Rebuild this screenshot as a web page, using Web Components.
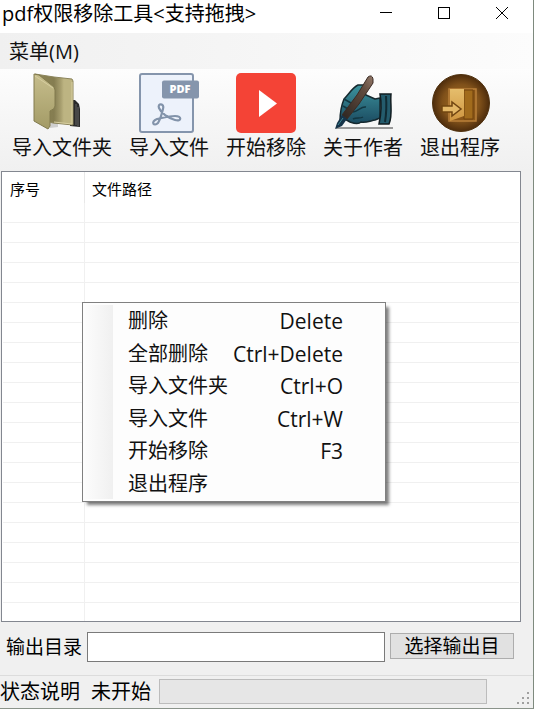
<!DOCTYPE html>
<html lang="zh-CN">
<head>
<meta charset="utf-8">
<title>pdf权限移除工具</title>
<style>
html,body{margin:0;height:100%}
body{font-family:"Open Sans","Noto Sans CJK SC",sans-serif;font-size:20px;line-height:28px;color:#111;background:#f0f0f0}
</style>
</head>
<body>
<app-window>
  <title-bar>pdf权限移除工具&lt;支持拖拽&gt;</title-bar>
  <menu-bar>菜单(M)</menu-bar>
  <tool-bar>
    <tool-button>
      <svg slot="icon" viewBox="0 0 60 60" width="60" height="60">
        <defs><linearGradient id="fa" x1="0" y1="0" x2="0" y2="1"><stop offset="0" stop-color="#c6bd8c"/><stop offset="1" stop-color="#a39b66"/></linearGradient>
        <linearGradient id="fb" x1="0" y1="0" x2="1" y2="0"><stop offset="0" stop-color="#8c8454"/><stop offset=".5" stop-color="#857d51"/><stop offset=".68" stop-color="#a89f6f"/><stop offset=".76" stop-color="#bdb482"/><stop offset="1" stop-color="#bdb482"/></linearGradient></defs>
        <path d="M18 55l8-1v-5l-8 1z" fill="#aaa" opacity=".5"/>
        <path d="M38 27h5l4 4 1 5v18l-10-1z" fill="#292929"/><path d="M44 31v21M46 34v19" stroke="#666"/>
        <path d="M3 1l19 3 18 2 1 2v44l-20-2-18-5z" fill="url(#fb)" stroke="#8b845b"/>
        <path d="M2 1l5 1 15 12 1 3v16q0 3-5 5v15l-2 3-14-8z" fill="url(#fa)" stroke="#827b4e"/>
        <path d="M3 3l18 12M40 9v42l-18-2" fill="none" stroke="#d7cea0"/>
      </svg>导入文件夹</tool-button>
    <tool-button>
      <svg slot="icon" viewBox="0 0 60 60" width="60" height="60">
        <rect x="1" y="1" width="53" height="58" rx="2" fill="#edf2fb" stroke="#8595ac" stroke-width="2"/>
        <rect x="23" y="7.500" width="37" height="18" rx="2" fill="#8595ac"/>
        <text x="41" y="20" text-anchor="middle" font-family="Open Sans" font-size="11" font-weight="800" fill="#fff">PDF</text>
        <path d="M24 36C26 30 18 30 20 35C22 40 29 45 36 47C43 49 43 43 36 43C29 43 24 45 18 46C11 49 15 54 19 50C22 45 23 40 24 36z" fill="none" stroke="#8293aa" stroke-width="2.200" stroke-linejoin="round"/>
      </svg>导入文件</tool-button>
    <tool-button>
      <svg slot="icon" viewBox="0 0 60 60" width="60" height="60"><rect width="60" height="60" rx="5" fill="#f44336"/><path d="M23 17v27l18-13.500z" fill="#fff"/></svg>开始移除</tool-button>
    <tool-button>
      <svg slot="icon" viewBox="0 0 60 60" width="60" height="60">
        <defs><linearGradient id="ha" x1="0" y1="0" x2="0" y2="1"><stop offset="0" stop-color="#3c929c"/><stop offset="1" stop-color="#1b4b61"/></linearGradient>
        <linearGradient id="pa" x1="1" y1="0" x2="0" y2="1"><stop offset="0" stop-color="#947a6a"/><stop offset=".3" stop-color="#624c3f"/><stop offset="1" stop-color="#2c2520"/></linearGradient></defs>
        <path d="M3 54h57v2H3z" fill="#999"/>
        <path d="M7 48c0-9 2-17 4-22 5-5 8-11 14-14h7l-2 5 3 5 9 4 5-1v20l-5 2c-5 1-10 3-14 2-3 3-8 1-11 0l-7-4z" fill="url(#ha)" stroke="#15282e" stroke-width="1.500" stroke-linejoin="round"/>
        <path d="M47 21h11c-1 10 2 21-2 30H46c2-9 3-19 1-30z" fill="#245b6c" stroke="#111c20" stroke-width="1.500"/><path d="M53 23q1 14-1 26" fill="none" stroke="#102b34" stroke-width="2"/>
        <path d="M11 26l7 4M10 33l5 3M20 39c6-1 8-6 13-5M20 46c4-2 7 0 10-2" fill="none" stroke="#123742" stroke-width="1.500"/>
        <path d="M35 4q4-3 5 2v4L26 31 14 46l-5-4 15-20z" fill="url(#pa)" stroke="#3b2b24"/>
        <path d="M9 42l5 4-5 7-7 3 2-6z" fill="#163449"/><path d="M5 52l5-7" stroke="#3e8794"/>
      </svg>关于作者</tool-button>
    <tool-button>
      <svg slot="icon" viewBox="0 0 60 60" width="60" height="60">
        <defs><radialGradient id="da"><stop offset="0" stop-color="#a87224"/><stop offset=".65" stop-color="#80511a"/><stop offset="1" stop-color="#4d2c0c"/></radialGradient>
        <linearGradient id="db" x1="0" y1="0" x2="0" y2="1"><stop offset="0" stop-color="#e5bd6c"/><stop offset="1" stop-color="#cf9640"/></linearGradient></defs>
        <circle cx="31" cy="30" r="28.500" fill="url(#da)" stroke="#50320f"/>
        <path d="M19 16h27v32H19z" fill="#8a5618" stroke="#b9803a" stroke-width="1.500"/>
        <path d="M34 17h9v29h-9z" fill="#a16b1c" stroke="#70420d"/>
        <path d="M20 16h14v27l-14 5z" fill="url(#db)"/>
        <path d="M12 33h10v-4l9 7-9 7v-4H12z" fill="#e4b867" stroke="#704511" stroke-width="1.500"/>
      </svg>退出程序</tool-button>
  </tool-bar>
  <file-list></file-list>
  <output-row></output-row>
  <status-bar><span>状态说明</span><span slot="state">未开始</span></status-bar>
  <context-menu slot="overlay">
    <menu-entry>删除<span slot="key">Delete</span></menu-entry>
    <menu-entry>全部删除<span slot="key">Ctrl+Delete</span></menu-entry>
    <menu-entry>导入文件夹<span slot="key">Ctrl+O</span></menu-entry>
    <menu-entry>导入文件<span slot="key">Ctrl+W</span></menu-entry>
    <menu-entry>开始移除<span slot="key">F3</span></menu-entry>
    <menu-entry>退出程序</menu-entry>
  </context-menu>
</app-window>
<script>
function element(name, html) {
  customElements.define(name, class extends HTMLElement {
    constructor() {
      super();
      this.attachShadow({mode: 'open'}).innerHTML =
        '<style>*{box-sizing:border-box}button{font:inherit;color:inherit;margin:0;padding:0;border:0;background:none}</style>' + html;
    }
  });
}
element('app-window', `<style>
:host{display:flex;flex-direction:column;height:100vh;position:relative;box-sizing:border-box;border-right:1px solid #7e8a7e;border-bottom:1px solid #8a938a;overflow:hidden}
</style><slot></slot><slot name="overlay"></slot>`);

element('title-bar', `<style>
:host{display:flex;height:33px;flex:none;background:#fff;color:#000;padding:0 2px}
h1{font:inherit;line-height:28px;margin:0;flex:1;white-space:nowrap}
button{width:58px;height:26px;display:grid;place-items:center}
svg{display:block;fill:none;stroke:#000;shape-rendering:crispEdges}
.x{shape-rendering:auto}
</style><h1><slot></slot></h1>
<button aria-label="最小化"><svg width="12" height="12"><path d="M0 5.500h12"/></svg></button>
<button aria-label="最大化"><svg width="12" height="12"><path d="M.5.5h11v11H.5z"/></svg></button>
<button aria-label="关闭"><svg class="x" width="12" height="12"><path d="M0 0l12 12M12 0L0 12"/></svg></button>`);

element('menu-bar', `<style>
:host{display:flex;flex:none;height:36px;box-sizing:border-box;align-items:center;padding:2px 0 0 9px;background:linear-gradient(90deg,#f0f0f0,#fcfcfc)}
</style><button><slot></slot></button>`);

element('tool-bar', `<style>
:host{display:flex;flex:none;gap:17px;height:102px;box-sizing:border-box;padding:4px 0 0 12px;background:linear-gradient(#fdfdfd,#f6f6f6 50%,#f0f0f0)}
</style><slot></slot>`);

element('tool-button', `<style>
:host{display:block}
button{display:flex;flex-direction:column;align-items:center;white-space:nowrap}
span{line-height:30px}
::slotted(svg){display:block;overflow:visible}
</style><button><slot name="icon"></slot><span><slot></slot></span></button>`);

element('file-list', `<style>
:host{display:block;flex:1;min-height:0;overflow:hidden;box-sizing:border-box;margin:0 12px 0 1px;border:1px solid #838790;background:#fff;padding:0 1px}
table{width:100%;border-collapse:separate;border-spacing:0;table-layout:fixed}
th{font-size:15px;line-height:20px;font-weight:400;text-align:left;height:31px;padding:2px 7px 0;color:#000}
th:first-child{width:82px;border-right:1px solid #e8e8e8}
td{height:20px;padding:0;border-bottom:1px solid #f0f0f0}
td:first-child{border-right:1px solid #f0f0f0}
</style><table><thead><tr><th>序号</th><th>文件路径</th></tr></thead><tbody>${'<tr><td></td><td></td></tr>'.repeat(21)}</tbody></table>`);

element('output-row', `<style>
:host{display:flex;flex:none;height:53px;box-sizing:border-box;padding:10px 19px 0 6px;font-size:19px;color:#000;align-items:flex-start}
label{width:81px;line-height:30px;white-space:nowrap}
input{flex:1;min-width:0;height:30px;border:1px solid #7a7a7a;background:#fff;font:inherit;padding:0 4px;margin-right:5px}
button{width:124px;height:26px;margin-top:1px;line-height:24px;background:#e1e1e1;border:1px solid #adadad;white-space:nowrap}
</style><label for="out">输出目录</label><input id="out" type="text"><button>选择输出目</button>`);

element('status-bar', `<style>
:host{display:flex;flex:none;height:33px;box-sizing:border-box;border-top:1px solid #dcdcdc;padding-right:3px;color:#000;line-height:32px;white-space:nowrap}
.text{display:flex;gap:11px;width:159px}
progress{appearance:none;flex:1;min-width:0;height:25px;margin:3px 29px 0 0;border:1px solid #bcbcbc;background:#e6e6e6}
progress::-webkit-progress-bar{background:#e6e6e6}
svg{align-self:flex-end;margin-bottom:3px;fill:#a0a0a0}
</style><div class="text"><slot></slot><slot name="state"></slot></div><progress value="0" max="100" aria-label="进度"></progress>
<svg width="14" height="14"><path d="M11 1h2v2h-2zM6 6h2v2H6zM11 6h2v2h-2zM1 11h2v2H1zM6 11h2v2H6zM11 11h2v2h-2z"/></svg>`);

element('context-menu', `<style>
:host{position:absolute;left:82px;top:302px;width:304px;height:200px;box-sizing:border-box;padding:2px 2px 1px;display:grid;grid-template-rows:repeat(6,1fr);border:1px solid #808080;background:linear-gradient(90deg,#fcfcfc,#f0f0f0) 2px 2px/28px calc(100% - 4px) no-repeat,#fdfdfd;box-shadow:4px 4px 3px -1px rgba(0,0,0,.5)}
</style><slot></slot>`);

element('menu-entry', `<style>
:host{display:grid}
button{display:flex;align-items:center;justify-content:space-between;padding:0 40px 0 43px;white-space:nowrap}
.key{font-size:21px}
</style><button role="menuitem"><span><slot></slot></span><span class="key"><slot name="key"></slot></span></button>`);
</script>
</body>
</html>
